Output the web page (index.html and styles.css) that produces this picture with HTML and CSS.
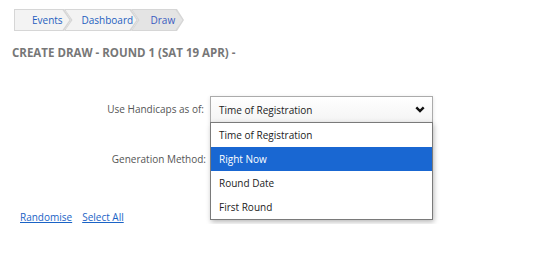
FILE: index.html
```html
<!DOCTYPE html>
<html>
<head>
<meta charset="utf-8">
<link rel="stylesheet" href="styles.css">
</head>
<body>
<div class="page">
  <nav class="crumbs">
    <a class="crumb first" href="#"><span class="crumb-in">Events</span></a>
    <a class="crumb mid" href="#"><span class="crumb-in">Dashboard</span></a>
    <a class="crumb last" href="#"><span class="crumb-in">Draw</span></a>
  </nav>
  <h1 class="title">CREATE DRAW - ROUND 1 (SAT 19 APR) -</h1>
  <div class="form">
    <div class="row row-handicap">
      <label class="label">Use Handicaps as of:</label>
      <div class="select-wrap">
        <div class="select">
          <span>Time of Registration</span>
          <svg class="chev" width="10" height="7" viewBox="0 0 10 7"><polyline points="1.3,1.3 5,5 8.7,1.3" fill="none" stroke="#111" stroke-width="2.4"/></svg>
        </div>
        <ul class="list">
          <li>Time of Registration</li>
          <li class="active">Right Now</li>
          <li>Round Date</li>
          <li>First Round</li>
        </ul>
      </div>
    </div>
    <div class="row row-method">
      <label class="label">Generation Method:</label>
    </div>
  </div>
  <div class="links">
    <a href="#">Randomise</a>
    <a href="#">Select All</a>
  </div>
</div>
</body>
</html>
```

FILE: styles.css
```css
* { box-sizing: border-box; }
html, body { margin: 0; padding: 0; background: #fff; }
body { font-family: "Open Sans", "DejaVu Sans", sans-serif; font-size: 10px; color: #555; }
.page { padding: 9px 0 0 0; }

.crumbs { display: flex; margin-left: 14px; height: 22px; }
.crumb { display: block; height: 22px; background: #d6d6d6; text-decoration: none; color: #1f5fbf; }
.crumb-in { display: flex; align-items: center; height: 20px; margin: 1px; background: #f3f3f3; line-height: 20px; }
.crumb.first { width: 57px; clip-path: polygon(0 0, calc(100% - 7px) 0, 100% 50%, calc(100% - 7px) 100%, 0 100%); }
.crumb.first .crumb-in { padding-left: 17px; clip-path: polygon(0 0, calc(100% - 7px) 0, 100% 50%, calc(100% - 7px) 100%, 0 100%); margin-right: 1.5px; }
.crumb.mid { width: 74px; margin-left: -7px; clip-path: polygon(0 0, calc(100% - 7px) 0, 100% 50%, calc(100% - 7px) 100%, 0 100%, 7px 50%); }
.crumb.mid .crumb-in { padding-left: 16px; clip-path: polygon(0 0, calc(100% - 7px) 0, 100% 50%, calc(100% - 7px) 100%, 0 100%, 7px 50%); margin-left: 1.5px; margin-right: 1.5px; }
.crumb.last { width: 53px; margin-left: -7px; clip-path: polygon(0 0, calc(100% - 7px) 0, 100% 50%, calc(100% - 7px) 100%, 0 100%, 7px 50%); }
.crumb.last .crumb-in { padding-left: 18px; background: #e4e4e4; clip-path: polygon(0 0, calc(100% - 7px) 0, 100% 50%, calc(100% - 7px) 100%, 0 100%, 7px 50%); margin-left: 1.5px; margin-right: 1.5px; color: #3a5bc0; }

.title { margin: 14px 0 0 12px; font-size: 11.5px; font-weight: 700; color: #777; line-height: 16px; letter-spacing: 0; }

.form { margin-top: 35px; }
.row { display: flex; align-items: center; }
.label { width: 204px; text-align: right; padding-right: 0; color: #555; line-height: 16px; }
.row-handicap { height: 26px; }
.row-handicap .label { margin-right: 6px; }
.row-method { margin-top: 28px; height: 18px; }
.row-method .label { width: 206px; }

.select-wrap { position: relative; z-index: 5; width: 223px; height: 26px; }
.select { display: flex; align-items: center; justify-content: space-between; height: 26px; border: 1px solid #ababab; border-bottom: none; background: linear-gradient(#fff, #f4f4f4); padding: 0 7px 0 8px; color: #222; box-shadow: 0 1px 4px rgba(0,0,0,0.12); }
.chev { display: block; margin-top: -1px; }

.list { position: absolute; left: 0; top: 26px; width: 223px; margin: 0; padding: 0; list-style: none; background: #fff; border: 1px solid #7a7a7a; box-shadow: 1px 2px 5px rgba(0,0,0,0.28); }
.list li { height: 24px; line-height: 24px; padding-left: 8px; color: #222; }
.list li.active { background: #1967d2; color: #fff; }

.links { display: flex; gap: 10px; margin: 42px 0 0 20px; line-height: 14px; }
.links a { color: #1a63c6; text-decoration: underline; }
```
